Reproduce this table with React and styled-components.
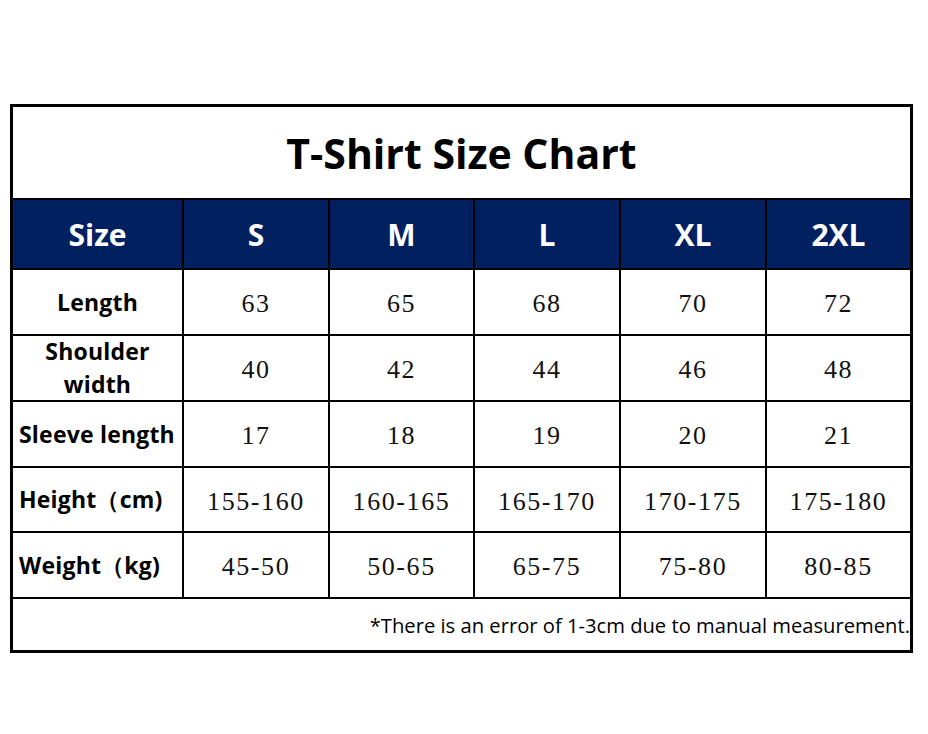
import React from "react";
import styled, { createGlobalStyle } from "styled-components";

const Global = createGlobalStyle`
  html, body { margin: 0; padding: 0; background: #ffffff; }
  body { width: 928px; height: 734px; overflow: hidden; }
`;

const Page = styled.div`
  padding: 104px 0 0 10px;
`;

const Chart = styled.div`
  width: 897px;
  border: 3px solid #000;
  background: #000;
  display: grid;
  grid-template-columns: 169px 144px 143px 144px 144px 143px;
  grid-template-rows: 91px 68px 64px 64px 64px 63px 64px 51px;
  row-gap: 2px;
  column-gap: 2px;
`;

const Title = styled.div`
  grid-column: 1 / -1;
  background: #fff;
  display: flex;
  align-items: center;
  justify-content: center;
  font-family: "Open Sans", "Noto Sans", sans-serif;
  font-weight: 700;
  font-size: 41px;
  color: #000;
`;

const HeadCell = styled.div`
  background: #002060;
  color: #fff;
  display: flex;
  align-items: center;
  justify-content: center;
  font-family: "Open Sans", "Noto Sans", sans-serif;
  font-weight: 700;
  font-size: 30px;
`;

const Label = styled.div`
  background: #fff;
  color: #000;
  display: flex;
  align-items: center;
  justify-content: ${(p) => (p.$left ? "flex-start" : "center")};
  padding-left: ${(p) => (p.$left ? "6px" : "0")};
  text-align: center;
  font-family: "Open Sans", "Noto Sans", sans-serif;
  font-weight: 700;
  font-size: 23px;
  line-height: 33px;
  letter-spacing: 0.2px;
  white-space: pre-line;
`;

const Value = styled.div`
  background: #fff;
  color: #111;
  display: flex;
  align-items: center;
  justify-content: center;
  font-family: "Liberation Serif", "Times New Roman", serif;
  font-size: 26px;
  letter-spacing: 1.6px;
  padding-top: 4px;
`;

const Footer = styled.div`
  grid-column: 1 / -1;
  background: #fff;
  display: flex;
  align-items: center;
  justify-content: flex-end;
  font-family: "Open Sans", "Noto Sans", sans-serif;
  font-size: 20.2px;
  color: #000;
  white-space: nowrap;
  overflow: hidden;
`;

const sizes = ["S", "M", "L", "XL", "2XL"];
const rows = [
  { label: "Length", values: ["63", "65", "68", "70", "72"] },
  { label: "Shoulder\nwidth", values: ["40", "42", "44", "46", "48"] },
  { label: "Sleeve length", values: ["17", "18", "19", "20", "21"], left: true },
  { label: "Height（cm)", values: ["155-160", "160-165", "165-170", "170-175", "175-180"], left: true },
  { label: "Weight（kg)", values: ["45-50", "50-65", "65-75", "75-80", "80-85"], left: true },
];

export default function App() {
  return (
    <Page>
      <Global />
      <Chart>
        <Title>T-Shirt Size Chart</Title>
        <HeadCell>Size</HeadCell>
        {sizes.map((s) => (
          <HeadCell key={s}>{s}</HeadCell>
        ))}
        {rows.map((r) => (
          <React.Fragment key={r.label}>
            <Label $left={r.left}>{r.label}</Label>
            {r.values.map((v, i) => (
              <Value key={i}>{v}</Value>
            ))}
          </React.Fragment>
        ))}
        <Footer>*There is an error of 1-3cm due to manual measurement.</Footer>
      </Chart>
    </Page>
  );
}
